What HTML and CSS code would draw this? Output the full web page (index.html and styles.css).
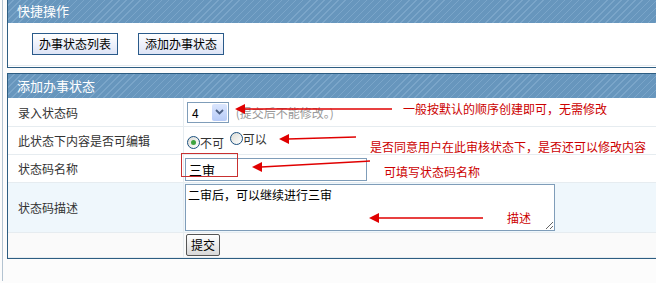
FILE: index.html
```html
<!DOCTYPE html>
<html lang="zh-CN">
<head>
    <meta charset="UTF-8">
    <title>添加办事状态</title>
    <link rel="stylesheet" href="styles.css">
</head>
<body>
    <div class="page">
        <!-- 快捷操作 -->
        <div class="panel panel-quick">
            <div class="panel-head">快捷操作</div>
            <div class="quick-body">
                <button class="quick-btn">办事状态列表</button>
                <button class="quick-btn">添加办事状态</button>
            </div>
        </div>

        <!-- 添加办事状态 表单 -->
        <div class="panel panel-form">
            <div class="panel-head">添加办事状态</div>
            <table class="form-table">
                <tr class="row-code">
                    <td class="label">录入状态码</td>
                    <td class="value">
                        <span class="select-box">
                            <span class="select-val">4</span>
                            <span class="select-btn">
                                <svg width="9" height="6" viewBox="0 0 9 6"><path d="M1 1 L4.5 4.5 L8 1" fill="none" stroke="#4d6185" stroke-width="1.8"/></svg>
                            </span>
                        </span>
                        <span class="hint">(提交后不能修改。)</span>
                    </td>
                </tr>
                <tr class="row-edit">
                    <td class="label">此状态下内容是否可编辑</td>
                    <td class="value">
                        <label class="radio"><span class="radio-dot checked"></span>不可</label>
                        <label class="radio"><span class="radio-dot"></span>可以</label>
                    </td>
                </tr>
                <tr class="row-name">
                    <td class="label">状态码名称</td>
                    <td class="value"><input class="text-input" type="text" value="三审"></td>
                </tr>
                <tr class="row-desc">
                    <td class="label">状态码描述</td>
                    <td class="value"><textarea class="text-area">二审后，可以继续进行三审</textarea></td>
                </tr>
                <tr class="row-submit">
                    <td class="label"></td>
                    <td class="value"><button class="submit-btn">提交</button></td>
                </tr>
            </table>
        </div>
    </div>

    <!-- 截图上的红色标注 -->
    <svg class="marks" width="656" height="283">
        <g stroke="#e00000" stroke-width="1.5" fill="none">
            <line x1="244" y1="109" x2="392" y2="109"/>
            <line x1="288" y1="139" x2="356" y2="137"/>
            <line x1="261" y1="167" x2="370" y2="161"/>
            <line x1="378" y1="218" x2="483" y2="218"/>
        </g>
        <g fill="#e00000">
            <polygon points="235,109 245,104 245,114"/>
            <polygon points="279,139 289,134 289,144"/>
            <polygon points="252,167 262,162 262,172"/>
            <polygon points="369,218 379,213 379,223"/>
        </g>
        <rect x="181.5" y="153.5" width="56" height="23" fill="none" stroke="#c83030" stroke-width="1"/>
    </svg>
    <span class="note note-code">一般按默认的顺序创建即可，无需修改</span>
    <span class="note note-edit">是否同意用户在此审核状态下，是否还可以修改内容</span>
    <span class="note note-name">可填写状态码名称</span>
    <span class="note note-desc">描述</span>
</body>
</html>
```

FILE: styles.css
```css
/* 基本设置 */
html, body {
    margin: 0;
    overflow: hidden;
}

body {
    position: relative;
    width: 656px;
    height: 283px;
    background-color: #fcfcfc;
    font-family: "Noto Sans CJK SC", "Liberation Sans", sans-serif;
    font-size: 12px;
    color: #333;
}

.page {
    margin-left: 2px;
    border-left: 1px solid #b3c3d1;
    padding-left: 4px;
    height: 283px;
}

/* 面板 (右边框在截图之外) */
.panel {
    border: 1px solid #2d5d82;
    border-right: none;
    background-color: #fff;
}

.panel-quick {
    margin-top: -2px;
}

.panel-form {
    margin-top: 5px;
}

.panel-head {
    height: 24px;
    line-height: 24px;
    padding-left: 9px;
    color: #fff;
    font-size: 13px;
    background-color: #6796bd;
    background-image: repeating-linear-gradient(135deg, #6796bd 0, #6796bd 4px, #7aa5c9 4px, #7aa5c9 5px);
}

/* 快捷操作按钮 */
.quick-body {
    height: 32px;
    padding: 10px 0 0 24px;
    border-bottom: 1px solid #e4eaef;
    margin-bottom: 1px;
    display: flex;
    gap: 20px;
}

.quick-btn {
    height: 22px;
    padding: 0 6px;
    border: 1px solid #2a5a8a;
    background: linear-gradient(#ffffff, #dde4f6);
    font-family: inherit;
    font-size: 12px;
    line-height: 20px;
    color: #000;
}

/* 表单表格 */
.form-table {
    width: 100%;
    border-collapse: collapse;
}

.form-table td {
    border-bottom: 1px solid #e6ecf0;
    padding: 0;
    vertical-align: middle;
}

.form-table .label {
    width: 165px;
    padding-left: 10px;
    border-right: 1px solid #e6ecf0;
    color: #333;
}

.form-table .value {
    padding-left: 1px;
}

.row-code td { height: 28px; }
.row-edit td { height: 27px; }
.row-name td { height: 27px; }
.row-desc td { height: 49px; background-color: #eff7fc; }
.row-submit td { height: 24px; background-color: #fafafa; }

/* 下拉框 */
.select-box {
    display: inline-flex;
    vertical-align: middle;
    margin-left: 2px;
    width: 40px;
    height: 19px;
    border: 1px solid #7f9db9;
    background-color: #fff;
}

.select-val {
    flex: 1;
    padding-left: 4px;
    line-height: 19px;
    color: #000;
}

.select-btn {
    width: 15px;
    margin: 1px;
    display: flex;
    align-items: center;
    justify-content: center;
    background: linear-gradient(#dbe6fd, #b7cbf7);
    border-radius: 2px;
}

.hint {
    margin-left: 4px;
    color: #999;
    vertical-align: middle;
}

/* 单选 */
.radio {
    display: inline-flex;
    align-items: center;
    margin-left: 2px;
    margin-right: 1px;
    color: #333;
}

.radio-dot {
    width: 11px;
    height: 11px;
    border: 1px solid #1c5180;
    border-radius: 50%;
    background: linear-gradient(135deg, #dcdcd5, #ffffff);
    display: flex;
    align-items: center;
    justify-content: center;
}

.radio-dot.checked::after {
    content: "";
    width: 5px;
    height: 5px;
    border-radius: 50%;
    background-color: #3fa33f;
}

/* 输入框 */
.text-input {
    box-sizing: border-box;
    width: 182px;
    height: 23px;
    margin: 2px 0 0 0;
    padding: 2px 3px;
    border: 1px solid #7f9db9;
    font-family: inherit;
    font-size: 13px;
    color: #000;
    outline: none;
}

.text-area {
    display: block;
    box-sizing: border-box;
    width: 370px;
    height: 47px;
    margin: 1px 0;
    padding: 1px 2px;
    border: 1px solid #7f9db9;
    font-family: inherit;
    font-size: 12px;
    color: #000;
    resize: both;
}

.submit-btn {
    height: 22px;
    margin-left: 1px;
    padding: 0 4px;
    border: 1px solid #555;
    border-radius: 2px;
    background: linear-gradient(#ffffff, #d8d8d8);
    font-family: inherit;
    font-size: 12px;
    line-height: 20px;
    color: #000;
}

/* 红色标注（覆盖在页面上） */
.marks {
    position: absolute;
    left: 0;
    top: 0;
}

.note {
    position: absolute;
    line-height: 16px;
    color: #cc0000;
    white-space: nowrap;
}

.note-code { left: 403px; top: 101px; }
.note-edit { left: 370px; top: 139px; }
.note-name { left: 384px; top: 164px; }
.note-desc { left: 507px; top: 210px; }
```
